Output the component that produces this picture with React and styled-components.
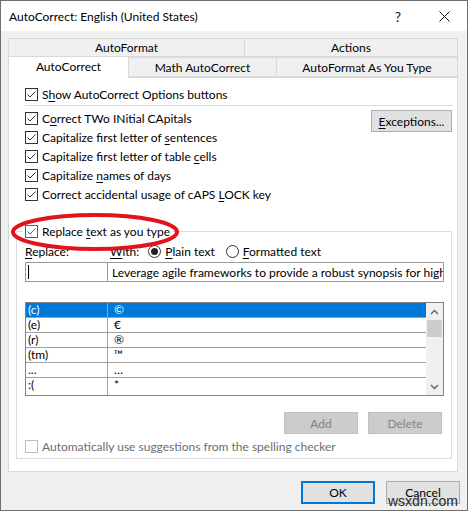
import React from 'react';
import styled, { createGlobalStyle } from 'styled-components';

const GlobalStyle = createGlobalStyle`
  html, body {
    margin: 0;
    padding: 0;
    background: #f0f0f0;
  }
  body {
    font-family: Lato, "Noto Sans", sans-serif;
    font-size: 12px;
    color: #000;
  }
`;

const Window = styled.div`
  position: relative;
  width: 468px;
  height: 511px;
  box-sizing: border-box;
  border: 1px solid #6f6f6f;
  background: #f0f0f0;
  display: flex;
  flex-direction: column;
  overflow: hidden;
`;

const TitleBar = styled.div`
  height: 30px;
  background: #fff;
  display: flex;
  align-items: center;
  padding-left: 8px;
`;

const Title = styled.div`
  flex: 1;
`;

const CaptionButton = styled.div`
  width: 46px;
  height: 30px;
  display: flex;
  align-items: center;
  justify-content: center;
  font-size: 14px;
  color: #111;
`;

const Body = styled.div`
  padding: 7px 9px 0 7px;
`;

const TabRow = styled.div`
  display: flex;
  height: ${p => p.$h}px;
  align-items: flex-end;
`;

const Tab = styled.div`
  box-sizing: border-box;
  width: ${p => p.$w}px;
  height: ${p => (p.$active ? 22 : p.$h)}px;
  border: 1px solid #d9d9d9;
  border-bottom: ${p => (p.$active ? 'none' : '1px solid #d9d9d9')};
  border-left: ${p => (p.$noLeft ? 'none' : '1px solid #d9d9d9')};
  background: ${p => (p.$active ? '#fff' : '#f0f0f0')};
  display: flex;
  align-items: center;
  justify-content: center;
  position: relative;
  z-index: ${p => (p.$active ? 1 : 0)};
  margin-bottom: ${p => (p.$active ? '-1px' : '0')};
  padding-bottom: ${p => (p.$active ? '2px' : '0')};
`;

const Panel = styled.div`
  box-sizing: border-box;
  height: 395px;
  background: #fff;
  border: 1px solid #d9d9d9;
  padding: 7px 4px 0 7px;
`;

const Options = styled.div`
  padding-left: 9px;
`;

const Separator = styled.div`
  height: 1px;
  background: #dcdcdc;
  margin: 1px 0 3px;
`;

const OptionsBody = styled.div`
  display: flex;
  justify-content: space-between;
  align-items: flex-start;
`;

const CheckRow = styled.label`
  display: flex;
  align-items: center;
  height: 19px;
  gap: 4px;
  color: ${p => (p.$disabled ? '#6d6d6d' : '#000')};
  white-space: nowrap;
`;

const Box = styled.span`
  box-sizing: border-box;
  width: 13px;
  height: 13px;
  flex: none;
  background: #fff;
  border: 1px solid ${p => (p.$disabled ? '#bcbcbc' : p.$accent ? '#0078d7' : '#333')};
  display: flex;
  align-items: center;
  justify-content: center;
`;

const Key = styled.span`
  text-decoration: underline;
  text-underline-offset: 2px;
`;

const Button = styled.div`
  box-sizing: border-box;
  width: ${p => p.$w || 74}px;
  height: ${p => p.$h || 22}px;
  background: ${p => (p.$disabled ? '#cccccc' : '#e1e1e1')};
  border: ${p => (p.$default ? '2px solid #0078d7' : `1px solid ${p.$disabled ? '#bfbfbf' : '#adadad'}`)};
  color: ${p => (p.$disabled ? '#838383' : '#000')};
  display: flex;
  align-items: center;
  justify-content: center;
  margin: ${p => p.$m || '0'};
`;

const Group = styled.fieldset`
  margin: 18px 1px 0 0;
  padding: 0 7px 2px 8px;
  border: 1px solid #dcdcdc;
  min-width: 0;
`;

const Legend = styled.legend`
  padding: 0 2px;
  margin-left: -2px;
`;

const TwoCol = styled.div`
  display: grid;
  grid-template-columns: 83px 1fr;
`;

const FieldLabels = styled(TwoCol)`
  height: 20px;
  align-items: center;
`;

const WithCell = styled.div`
  display: flex;
  align-items: center;
  padding-left: 2px;
`;

const Radio = styled.span`
  box-sizing: border-box;
  width: 13px;
  height: 13px;
  border-radius: 50%;
  border: 1px solid #333;
  background: #fff;
  display: inline-flex;
  align-items: center;
  justify-content: center;
  margin: ${p => p.$m};
  &::after {
    content: '';
    width: 7px;
    height: 7px;
    border-radius: 50%;
    background: ${p => (p.$on ? '#222' : 'transparent')};
  }
`;

const Inputs = styled(TwoCol)`
  margin-top: 1px;
  height: 20px;
`;

const Input = styled.div`
  box-sizing: border-box;
  height: 20px;
  border: 1px solid #9a9a9a;
  border-left: ${p => (p.$joined ? 'none' : '1px solid #9a9a9a')};
  background: #fff;
  display: flex;
  align-items: center;
  padding-left: ${p => (p.$joined ? 4 : 2)}px;
  white-space: nowrap;
  overflow: hidden;
`;

const Caret = styled.span`
  width: 1px;
  height: 14px;
  background: #000;
`;

const List = styled.div`
  box-sizing: border-box;
  margin-top: 20px;
  height: 94px;
  border: 1px solid #828282;
  background: #fff;
  display: flex;
  overflow: hidden;
`;

const Rows = styled.div`
  flex: 1;
`;

const Row = styled.div`
  display: grid;
  grid-template-columns: 82px 1fr;
  height: ${p => (p.$last ? 17 : 15)}px;
  box-sizing: border-box;
  border-bottom: ${p => (p.$last ? 'none' : '1px solid #a0a0a0')};
  background: ${p => (p.$selected ? '#0078d7' : '#fff')};
  color: ${p => (p.$selected ? '#fff' : '#000')};
  line-height: 14px;
`;

const Cell = styled.div`
  padding-left: ${p => p.$pad}px;
  border-right: ${p => (p.$divider ? '1px solid #a0a0a0' : 'none')};
  white-space: nowrap;
`;

const ScrollBar = styled.div`
  width: 17px;
  background: #f0f0f0;
  display: flex;
  flex-direction: column;
  align-items: center;
`;

const ScrollArrow = styled.div`
  height: 17px;
  width: 17px;
  display: flex;
  align-items: center;
  justify-content: center;
`;

const Thumb = styled.div`
  width: 15px;
  height: 17px;
  background: #cdcdcd;
`;

const ScrollSpace = styled.div`
  flex: 1;
`;

const ButtonRow = styled.div`
  display: flex;
  justify-content: flex-end;
  gap: 10px;
  margin: 16px 2px 3px 0;
`;

const Footer = styled.div`
  display: flex;
  justify-content: flex-end;
  gap: 11px;
  padding: 9px 7px 0 0;
`;

const Ellipse = styled.svg`
  position: absolute;
  left: 9px;
  top: 211px;
  pointer-events: none;
`;

const Watermark = styled.span`
  position: absolute;
  left: 387px;
  top: 492px;
  font-family: "Liberation Sans", Arial, sans-serif;
  font-size: 14px;
  line-height: 16px;
  color: #2b2b2b;
`;

const Check = ({ color = '#333' }) => (
  <svg width="11" height="11" viewBox="0 0 11 11">
    <polyline points="1.5,5.5 4,8 9.5,2.5" fill="none" stroke={color} strokeWidth="1" />
  </svg>
);

const CheckBox = ({ checked, accent, disabled, children }) => (
  <CheckRow $disabled={disabled}>
    <Box $accent={accent} $disabled={disabled}>
      {checked && <Check color={accent ? '#0078d7' : '#333'} />}
    </Box>
    <span>{children}</span>
  </CheckRow>
);

const Chevron = ({ up }) => (
  <svg width="9" height="6" viewBox="0 0 9 6">
    <polyline
      points={up ? '1,5 4.5,1.5 8,5' : '1,1 4.5,4.5 8,1'}
      fill="none"
      stroke="#606060"
      strokeWidth="1.3"
    />
  </svg>
);

const entries = [
  ['(c)', '©'],
  ['(e)', '€'],
  ['(r)', '®'],
  ['(tm)', '™'],
  ['...', '…'],
  [':(', '*'],
];

export default function App() {
  return (
    <>
      <GlobalStyle />
      <Window>
        <TitleBar>
          <Title>AutoCorrect: English (United States)</Title>
          <CaptionButton>?</CaptionButton>
          <CaptionButton>
            <svg width="11" height="11" viewBox="0 0 11 11">
              <path d="M0.5 0.5 L10.5 10.5 M10.5 0.5 L0.5 10.5" stroke="#111" strokeWidth="1" />
            </svg>
          </CaptionButton>
        </TitleBar>
        <Body>
          <TabRow $h={19}>
            <Tab $w={237} $h={19}>AutoFormat</Tab>
            <Tab $w={213} $h={19} $noLeft>Actions</Tab>
          </TabRow>
          <TabRow $h={20}>
            <Tab $w={121} $h={20} $active>AutoCorrect</Tab>
            <Tab $w={148} $h={20} $noLeft>Math AutoCorrect</Tab>
            <Tab $w={181} $h={20} $noLeft>AutoFormat As You Type</Tab>
          </TabRow>
          <Panel>
            <Options>
              <CheckBox checked>
                S<Key>h</Key>ow AutoCorrect Options buttons
              </CheckBox>
              <Separator />
              <OptionsBody>
                <div>
                  <CheckBox checked>
                    C<Key>o</Key>rrect TWo INitial CApitals
                  </CheckBox>
                  <CheckBox checked>
                    Capitalize first letter of <Key>s</Key>entences
                  </CheckBox>
                  <CheckBox checked>
                    Capitalize first letter of table <Key>c</Key>ells
                  </CheckBox>
                  <CheckBox checked>
                    Capitalize <Key>n</Key>ames of days
                  </CheckBox>
                  <CheckBox checked>
                    Correct accidental usage of cAPS <Key>L</Key>OCK key
                  </CheckBox>
                </div>
                <Button $w={81} $h={22} $m="1px 1px 0 0">
                  <span>
                    <Key>E</Key>xceptions...
                  </span>
                </Button>
              </OptionsBody>
            </Options>
            <Group>
              <Legend>
                <CheckBox checked accent>
                  Replace <Key>t</Key>ext as you type
                </CheckBox>
              </Legend>
              <FieldLabels>
                <span>
                  <Key>R</Key>eplace:
                </span>
                <WithCell>
                  <span>
                    <Key>W</Key>ith:
                  </span>
                  <Radio $on $m="0 4px 0 9px" />
                  <span>
                    <Key>P</Key>lain text
                  </span>
                  <Radio $m="0 4px 0 11px" />
                  <span>
                    <Key>F</Key>ormatted text
                  </span>
                </WithCell>
              </FieldLabels>
              <Inputs>
                <Input>
                  <Caret />
                </Input>
                <Input $joined>Leverage agile frameworks to provide a robust synopsis for high level overviews.</Input>
              </Inputs>
              <List>
                <Rows>
                  {entries.map(([from, to], i) => (
                    <Row key={from} $selected={i === 0} $last={i === entries.length - 1}>
                      <Cell $pad={2} $divider>{from}</Cell>
                      <Cell $pad={6}>{to}</Cell>
                    </Row>
                  ))}
                </Rows>
                <ScrollBar>
                  <ScrollArrow>
                    <Chevron up />
                  </ScrollArrow>
                  <Thumb />
                  <ScrollSpace />
                  <ScrollArrow>
                    <Chevron />
                  </ScrollArrow>
                </ScrollBar>
              </List>
              <ButtonRow>
                <Button $disabled>Add</Button>
                <Button $disabled>Delete</Button>
              </ButtonRow>
              <CheckBox disabled>Automatically use suggestions from the spelling checker</CheckBox>
            </Group>
          </Panel>
        </Body>
        <Footer>
          <Button $default $h={23}>OK</Button>
          <Button $h={23}>Cancel</Button>
        </Footer>
        <Ellipse width="172" height="40" viewBox="0 0 172 40">
          <ellipse cx="85" cy="20" rx="82" ry="17" fill="none" stroke="#e3131b" strokeWidth="4" />
        </Ellipse>
        <Watermark>wsxdn.com</Watermark>
      </Window>
    </>
  );
}
